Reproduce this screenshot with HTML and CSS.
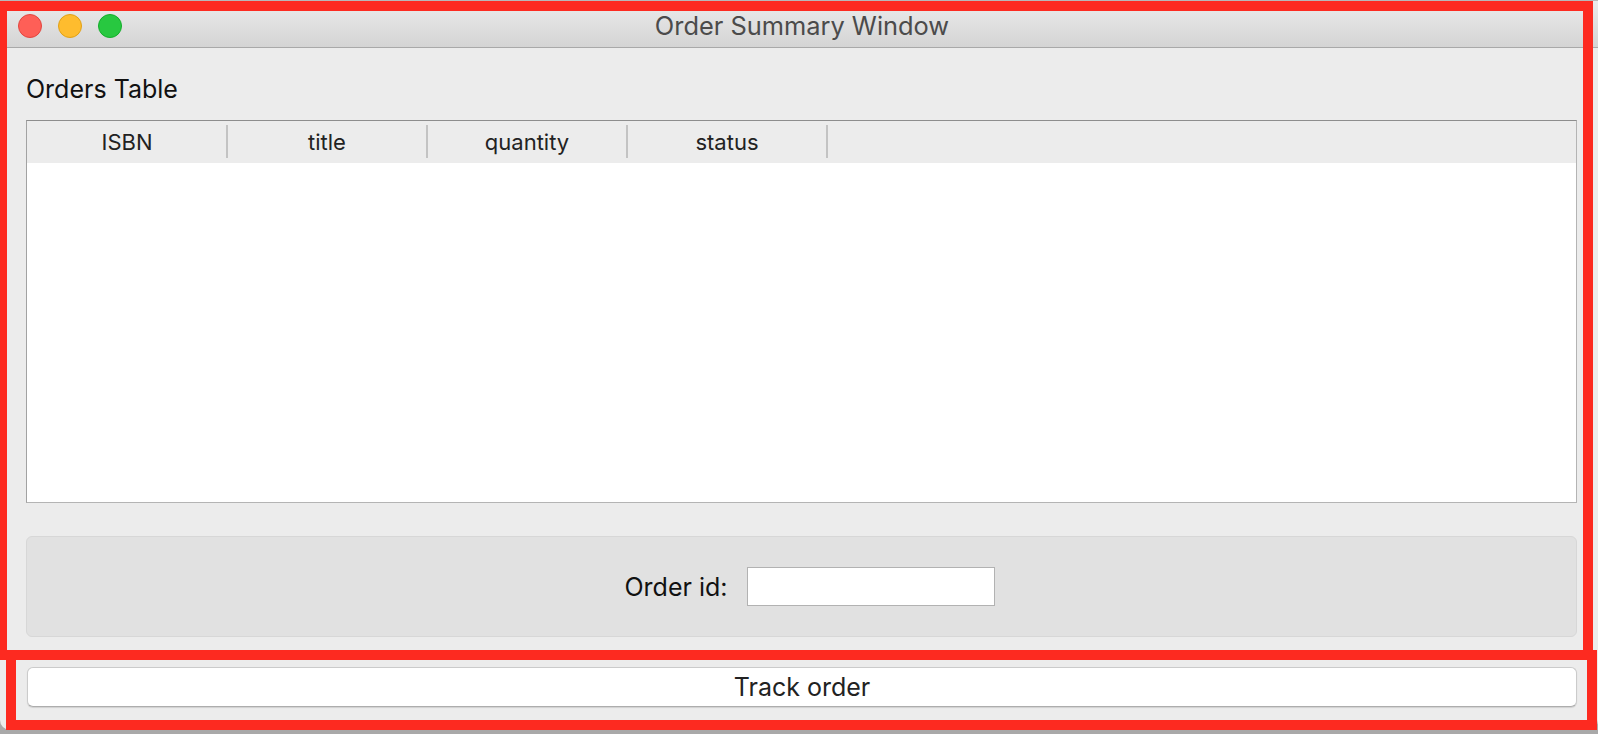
FILE: index.html
```html
<!DOCTYPE html>
<html>
<head>
<meta charset="utf-8">
<title>Order Summary Window</title>
<link rel="stylesheet" href="styles.css">
</head>
<body>
<div class="window">
  <div class="titlebar">
    <div class="lights">
      <span class="light red"></span>
      <span class="light yellow"></span>
      <span class="light green"></span>
    </div>
    <div class="title">Order Summary Window</div>
  </div>
  <div class="content">
    <div class="section-label">Orders Table</div>
    <div class="table">
      <div class="thead">
        <div class="th">ISBN</div>
        <div class="th">title</div>
        <div class="th">quantity</div>
        <div class="th">status</div>
      </div>
      <div class="tbody"></div>
    </div>
    <div class="group">
      <label class="field-label" for="orderId">Order id:</label>
      <input class="field-input" id="orderId" type="text">
    </div>
    <button class="btn">Track order</button>
  </div>
</div>
<div class="note-box upper"></div>
<div class="note-box lower"></div>
</body>
</html>
```
FILE: styles.css
```css
html, body {
  margin: 0;
  padding: 0;
}
body {
  width: 1598px;
  height: 734px;
  background: #a9a9a9;
  font-family: Inter, "Liberation Sans", sans-serif;
  overflow: hidden;
  position: relative;
}
.window {
  width: 1598px;
  height: 730px;
  background: #ececec;
  border-radius: 0 0 10px 10px;
  display: flex;
  flex-direction: column;
  box-sizing: border-box;
}
.titlebar {
  height: 48px;
  box-sizing: border-box;
  border-top: 1px solid #b8b8b8;
  border-bottom: 1px solid #a9a9a9;
  background: linear-gradient(#ebebeb, #d4d4d4);
  display: flex;
  align-items: center;
  position: relative;
}
.lights {
  display: flex;
  gap: 16px;
  padding-left: 18px;
  padding-top: 3px;
}
.light {
  width: 24px;
  height: 24px;
  border-radius: 50%;
  box-sizing: border-box;
}
.light.red { background: #fe5f57; border: 1px solid #e2463f; }
.light.yellow { background: #febc2e; border: 1px solid #e1a116; }
.light.green { background: #28c840; border: 1px solid #14ae2b; }
.title {
  flex: 1;
  text-align: center;
  margin-right: 116px;
  font-size: 25.4px;
  color: #4b4b4b;
  padding-top: 2px;
}
.content {
  flex: 1;
  display: flex;
  flex-direction: column;
  padding: 0 21px 0 26px;
}
.section-label {
  margin-top: 26px;
  height: 30px;
  line-height: 30px;
  font-size: 25px;
  color: #111;
}
.table {
  margin-top: 16px;
  height: 383px;
  box-sizing: border-box;
  border: 1px solid #b4b4b4;
  border-top-color: #8d8d8d;
  border-left-color: #a2a2a2;
  display: flex;
  flex-direction: column;
  background: #fff;
}
.thead {
  height: 42px;
  background: #ececec;
  display: flex;
}
.th {
  width: 200px;
  height: 42px;
  line-height: 42px;
  text-align: center;
  font-size: 22px;
  color: #222;
  position: relative;
}
.th::after {
  content: "";
  position: absolute;
  right: -1px;
  top: 4px;
  bottom: 5px;
  width: 2px;
  background: #c3c3c3;
}
.tbody {
  flex: 1;
  background: #fff;
}
.group {
  margin-top: 33px;
  height: 101px;
  box-sizing: border-box;
  background: #e1e1e1;
  border: 1px solid #d7d7d7;
  border-radius: 6px;
  display: flex;
  align-items: center;
  justify-content: center;
  gap: 19px;
  padding-left: 16px;
}
.field-label {
  font-size: 25px;
  color: #111;
}
.field-input {
  width: 248px;
  height: 39px;
  box-sizing: border-box;
  border: 1px solid #b2b2b2;
  background: #fff;
  margin: 0;
  padding: 0 6px;
  font-family: inherit;
  font-size: 22px;
  outline: none;
  border-radius: 0;
}
.btn {
  margin-top: 30px;
  margin-left: 1px;
  height: 40px;
  box-sizing: border-box;
  background: #fff;
  border: 1px solid #cbcbcb;
  border-bottom-color: #adadad;
  border-radius: 6px;
  box-shadow: 0 1px 1px rgba(0, 0, 0, 0.12);
  font-family: inherit;
  font-size: 25px;
  color: #222;
  padding: 0;
}
.note-box {
  position: absolute;
  box-sizing: border-box;
  border: 10px solid #fd2a20;
  pointer-events: none;
}
.note-box.upper {
  left: -3px;
  top: 1px;
  width: 1596px;
  height: 659px;
}
.note-box.lower {
  left: 6px;
  top: 650px;
  width: 1591px;
  height: 80px;
}
```
